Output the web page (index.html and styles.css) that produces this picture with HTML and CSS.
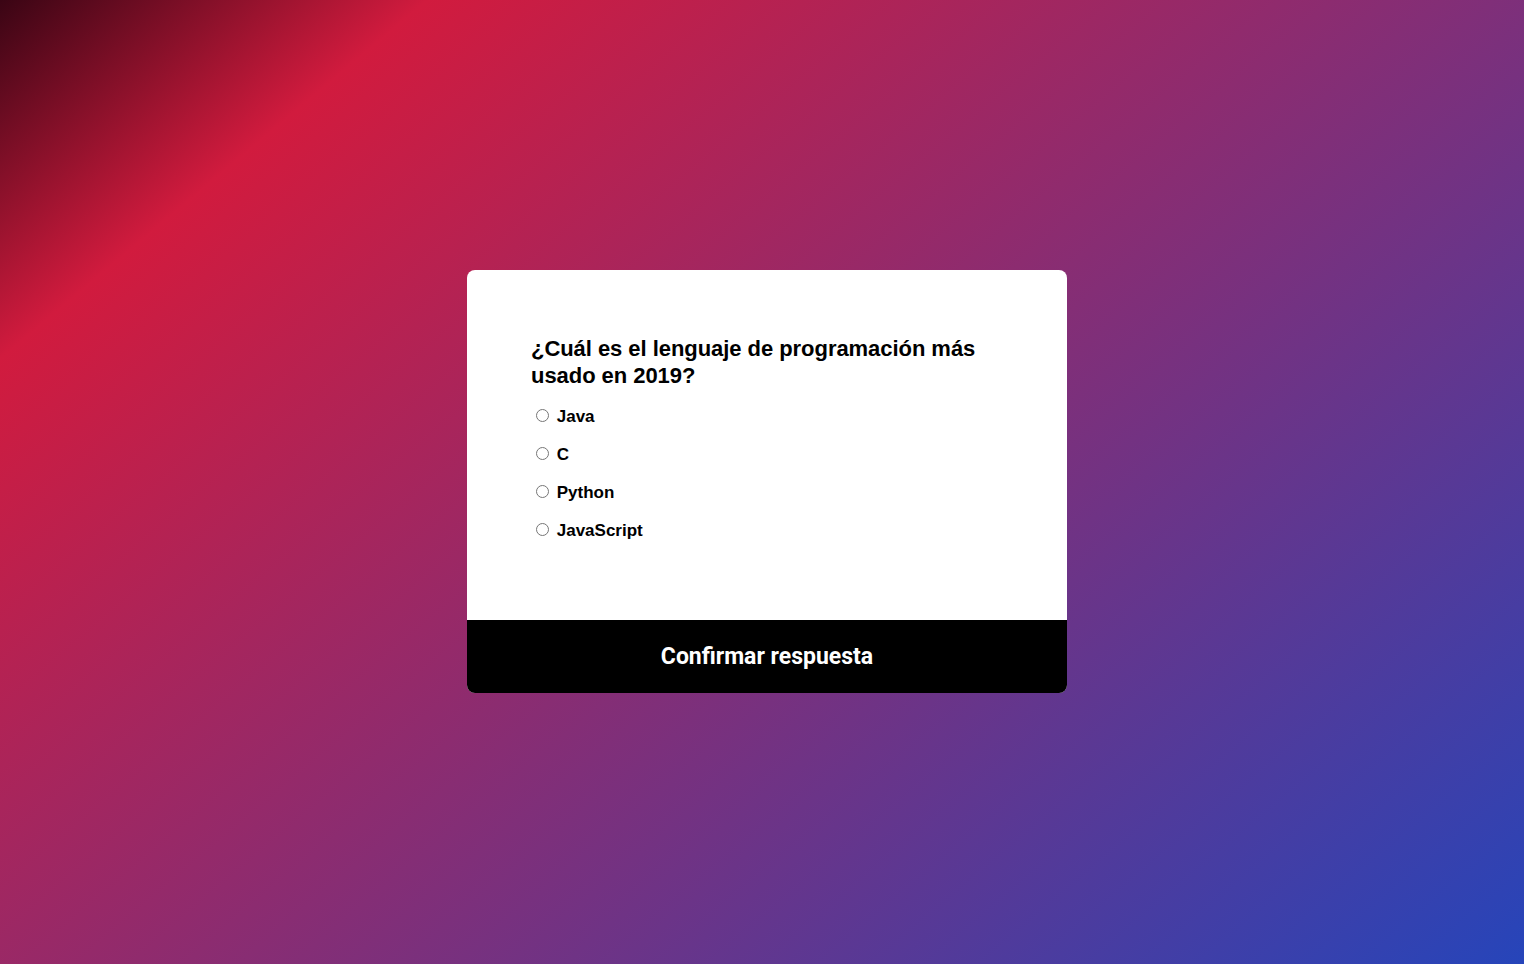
FILE: index.html
```html
<!DOCTYPE html>
<html lang="es">
<head>
<meta charset="utf-8">
<title>Quiz</title>
<link rel="stylesheet" href="styles.css">
</head>
<body>
<main class="page">
  <div class="quiz">
    <div class="quiz-body">
      <h2 class="question">¿Cuál es el lenguaje de programación más usado en 2019?</h2>
      <ul class="answers">
        <li><label><input type="radio" name="answer" value="a"> Java</label></li>
        <li><label><input type="radio" name="answer" value="b"> C</label></li>
        <li><label><input type="radio" name="answer" value="c"> Python</label></li>
        <li><label><input type="radio" name="answer" value="d"> JavaScript</label></li>
      </ul>
    </div>
    <button class="submit" type="button">Confirmar respuesta</button>
  </div>
</main>
</body>
</html>
```

FILE: styles.css
```css
html, body {
  margin: 0;
  height: 100%;
}

body {
  background: linear-gradient(140deg, #3a0514 0%, #d11b3e 16%, #2645ba 100%);
  font-family: "Liberation Sans", Arial, sans-serif;
}

.page {
  height: 100%;
  display: flex;
  align-items: center;
  justify-content: center;
  padding-left: 10px;
  padding-bottom: 1px;
  box-sizing: border-box;
}

.quiz {
  width: 600px;
  background: #fff;
  border-radius: 8px;
  overflow: hidden;
}

.quiz-body {
  padding: 65px 64px 78px;
}

.question {
  margin: 0 0 17px;
  font-size: 22px;
  line-height: 27px;
  font-weight: bold;
  letter-spacing: -0.05px;
  color: #000;
}

.answers {
  list-style: none;
  margin: 0;
  padding: 0;
  display: flex;
  flex-direction: column;
  gap: 16px;
}

.answers li {
  height: 22px;
  line-height: 22px;
  font-size: 17px;
  font-weight: bold;
  color: #000;
}

.submit {
  display: block;
  width: 100%;
  height: 73px;
  border: 0;
  background: #000;
  color: #fff;
  font-family: Roboto, "Liberation Sans", sans-serif;
  font-weight: 700;
  font-size: 23px;
  cursor: pointer;
}
```
